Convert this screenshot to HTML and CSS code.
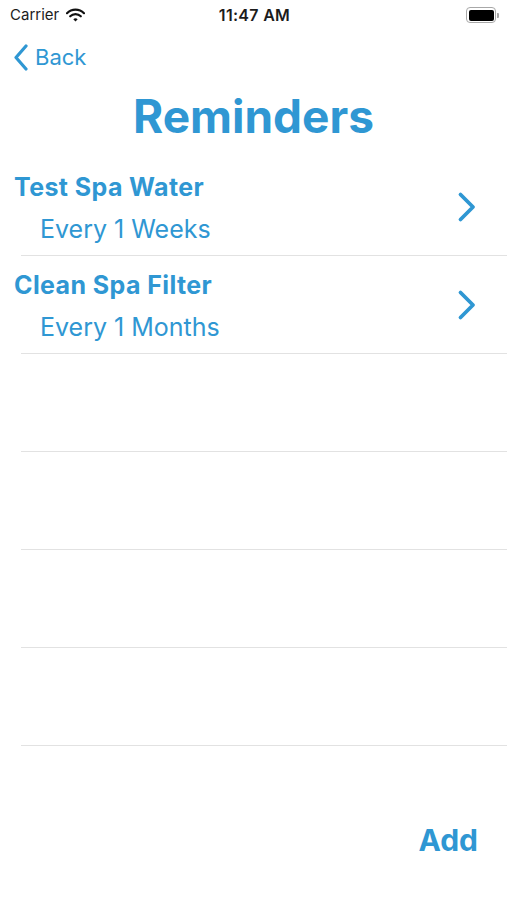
FILE: index.html
```html
<html>
    <head>
        <link rel="stylesheet" href="styles.css">
    </head>
    <body>
        <div class="status-bar">
            <div class="carrier">
                Carrier
                <svg class="wifi" width="19" height="14" viewBox="0 0 19 14">
                    <path d="M1 5.2 A12 12 0 0 1 18 5.2" fill="none" stroke="#111" stroke-width="2.2" stroke-linecap="round"/>
                    <path d="M4.2 8.3 A7.5 7.5 0 0 1 14.8 8.3" fill="none" stroke="#111" stroke-width="2.2" stroke-linecap="round"/>
                    <path d="M7.3 11.2 L9.5 13.4 L11.7 11.2 A3.2 3.2 0 0 0 7.3 11.2 Z" fill="#111"/>
                </svg>
            </div>
            <div class="time">11:47 AM</div>
            <div class="battery">
                <div class="battery-body"><div class="battery-fill"></div></div>
                <div class="battery-nub"></div>
            </div>
        </div>

        <div class="nav">
            <svg class="back-chevron" width="16" height="27" viewBox="0 0 16 27">
                <path d="M13 2 L3 13.5 L13 25" fill="none" stroke="#2f97d3" stroke-width="3.2" stroke-linecap="round" stroke-linejoin="round"/>
            </svg>
            <span class="back-label">Back</span>
        </div>

        <h1 class="title">Reminders</h1>

        <div class="list">
            <div class="row">
                <div class="row-text">
                    <div class="row-title">Test Spa Water</div>
                    <div class="row-sub">Every 1 Weeks</div>
                </div>
                <svg class="chevron" width="20" height="32" viewBox="0 0 20 32">
                    <path d="M3.5 3.5 L16 16 L3.5 28.5" fill="none" stroke="#2f97d3" stroke-width="3.8" stroke-linecap="round" stroke-linejoin="round"/>
                </svg>
            </div>
            <div class="row">
                <div class="row-text">
                    <div class="row-title">Clean Spa Filter</div>
                    <div class="row-sub">Every 1 Months</div>
                </div>
                <svg class="chevron" width="20" height="32" viewBox="0 0 20 32">
                    <path d="M3.5 3.5 L16 16 L3.5 28.5" fill="none" stroke="#2f97d3" stroke-width="3.8" stroke-linecap="round" stroke-linejoin="round"/>
                </svg>
            </div>
            <div class="row"></div>
            <div class="row"></div>
            <div class="row"></div>
            <div class="row"></div>
        </div>

        <div class="footer">
            <span class="add">Add</span>
        </div>
    </body>
</html>
```

FILE: styles.css
```css
body {
    margin: 0;
    width: 507px;
    height: 900px;
    background: #fff;
    font-family: 'Inter', 'Roboto', sans-serif;
    color: #2f97d3;
    overflow: hidden;
}
.status-bar {
    height: 30px;
    line-height: 30px;
    padding: 0 8px 0 10px;
    display: flex;
    justify-content: space-between;
    align-items: center;
    font-size: 15px;
    color: #1c1c1c;
}
.carrier {
    width: 120px;
    display: flex;
    align-items: center;
    gap: 7px;
}
.wifi {
    margin-top: -1px;
}
.time {
    font-size: 16px;
    font-weight: 600;
    letter-spacing: 0.3px;
}
.battery {
    width: 120px;
    display: flex;
    justify-content: flex-end;
    align-items: center;
    gap: 1px;
}
.battery-body {
    width: 25px;
    height: 11px;
    border: 1.5px solid #a8a8a8;
    border-radius: 4px;
    padding: 1.5px;
}
.battery-fill {
    width: 100%;
    height: 100%;
    background: #000;
    border-radius: 2px;
}
.battery-nub {
    width: 2px;
    height: 5px;
    background: #a8a8a8;
    border-radius: 0 1px 1px 0;
}
.nav {
    height: 50px;
    box-sizing: border-box;
    padding: 5px 0 0 13px;
    line-height: 45px;
    display: flex;
    align-items: center;
    gap: 6px;
    font-size: 22px;
}
.title {
    margin: 8px 0 14px;
    font-size: 46px;
    line-height: 56px;
    font-weight: 700;
    text-align: center;
}
.list {
    display: flex;
    flex-direction: column;
}
.row {
    height: 97px;
    margin-left: 21px;
    border-bottom: 1px solid #e2e2e2;
    display: flex;
    justify-content: space-between;
    align-items: center;
}
.row-text {
    align-self: flex-start;
    padding-top: 15px;
}
.row-title {
    margin-left: -7px;
    font-size: 25px;
    line-height: 28px;
    font-weight: 700;
    letter-spacing: 0.4px;
}
.row-sub {
    margin: 13px 0 0 19px;
    font-size: 25px;
    line-height: 30px;
}
.chevron {
    margin-right: 30px;
}
.footer {
    display: flex;
    justify-content: flex-end;
    padding-right: 29px;
    margin-top: 76px;
}
.add {
    font-size: 30px;
    line-height: 36px;
    font-weight: 700;
}
```
